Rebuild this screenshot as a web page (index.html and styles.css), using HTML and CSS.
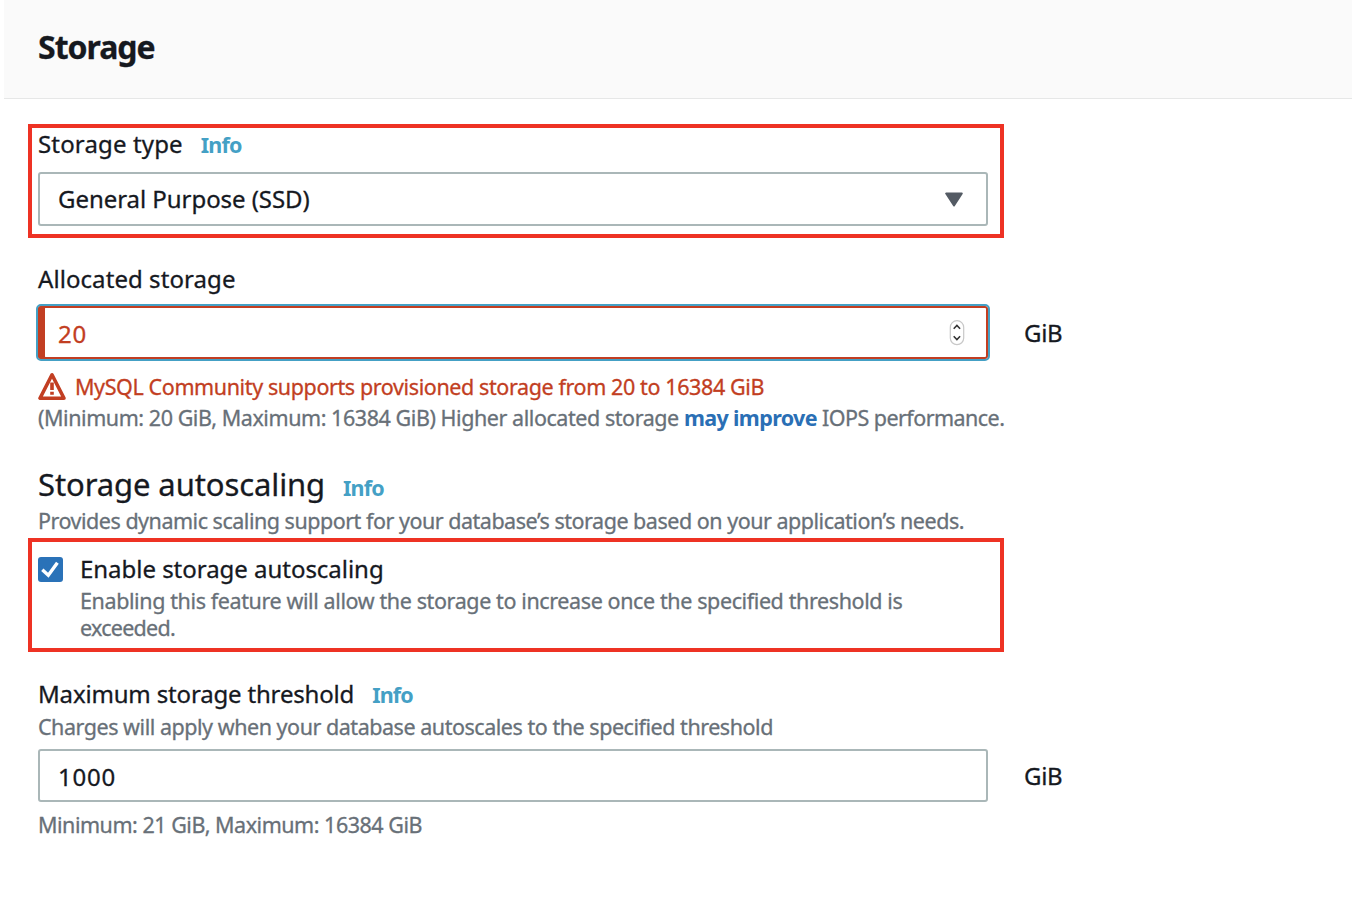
FILE: index.html
```html
<!DOCTYPE html>
<html lang="en">
<head>
<meta charset="utf-8">
<title>Storage</title>
<link rel="stylesheet" href="styles.css">
</head>
<body>
<header class="panel-header"><h2 class="title">Storage</h2></header>
<main class="form">
  <section class="highlight type-box">
    <div class="label-row"><span class="label type-label">Storage type</span><a class="info">Info</a></div>
    <div class="field select"><span class="type-value">General Purpose (SSD)</span>
      <svg class="caret" viewBox="0 0 18 15"><path d="M1.2 1.5h15.6L9 13.5z" fill="#545b64" stroke="#545b64" stroke-width="2" stroke-linejoin="round"/></svg>
    </div>
  </section>

  <section class="allocated">
    <div class="label-row"><span class="label alloc-label">Allocated storage</span></div>
    <div class="field-row">
      <div class="field invalid"><span class="number">20</span>
        <svg class="stepper" viewBox="0 0 18 28"><rect x="2.3" y="1.7" width="13.4" height="24" rx="6.7" fill="#fff" stroke="#c8c8c8" stroke-width="1.2"/><path d="M5.7 9.7 8.9 6.5l3.2 3.2M5.7 17.3l3.2 3.2 3.2-3.2" fill="none" stroke="#333" stroke-width="1.6"/></svg>
      </div>
      <span class="unit">GiB</span>
    </div>
    <div class="error-row">
      <svg class="warning" viewBox="0 0 28 28"><path d="M14 2.8 2 26.2h24z" fill="none" stroke="#c23e22" stroke-width="3.6" stroke-linejoin="round"/><path d="M14 10.5v7.5M14 19.8v3" stroke="#c23e22" stroke-width="3.6"/></svg>
      <span class="error-text">MySQL Community supports provisioned storage from 20 to 16384 GiB</span>
    </div>
    <p class="hint alloc-hint">(Minimum: 20 GiB, Maximum: 16384 GiB) Higher allocated storage <a class="link">may improve</a><span class="hint-tail"> IOPS performance.</span></p>
  </section>

  <section class="autoscaling">
    <div class="heading-row"><h3 class="subtitle">Storage autoscaling</h3><a class="info">Info</a></div>
    <p class="hint auto-hint">Provides dynamic scaling support for your database’s storage based on your application’s needs.</p>
  </section>

  <section class="highlight check-box">
    <svg class="checkbox" viewBox="0 0 25 25"><rect width="25" height="25" rx="3" fill="#2a72b8"/><path d="m4.3 12.8 6 5.4L19.4 5.7" fill="none" stroke="#fff" stroke-width="3.4"/></svg>
    <div class="check-copy">
      <div class="label check-label">Enable storage autoscaling</div>
      <p class="hint check-hint">Enabling this feature will allow the storage to increase once the specified threshold is<br><span class="check-tail">exceeded.</span></p>
    </div>
  </section>

  <section class="threshold">
    <div class="label-row"><span class="label max-label">Maximum storage threshold</span><a class="info">Info</a></div>
    <p class="hint max-hint">Charges will apply when your database autoscales to the specified threshold</p>
    <div class="field-row">
      <div class="field threshold-field"><span class="number">1000</span></div>
      <span class="unit">GiB</span>
    </div>
    <p class="hint range-hint">Minimum: 21 GiB, Maximum: 16384 GiB</p>
  </section>
</main>
</body>
</html>
```
FILE: styles.css
```css
* { box-sizing: border-box; }
body {
  margin: 0;
  background: #fff;
  color: #16191f;
  font-family: "Noto Sans", sans-serif;
  font-size: 24px;
  white-space: nowrap;
  -webkit-text-stroke: 0.3px;
}
h2, h3, p { margin: 0; font-weight: 400; }
svg { display: block; flex: none; }

.panel-header {
  width: 1348px;
  height: 99px;
  margin-left: 4px;
  padding: 26px 34px 0;
  background: #fafafa;
  border-bottom: 1px solid #e6e7e7;
}
.title { font-size: 32px; font-weight: 700; line-height: 42px; letter-spacing: -1px; }

.form { padding: 25px 0 0 28px; }
.highlight {
  width: 976px;
  height: 114px;
  border: 4px solid #ee3224;
  padding-left: 6px;
}
.label-row { display: flex; align-items: baseline; gap: 18px; height: 32px; line-height: 32px; }
.type-label { letter-spacing: 0.15px; }
.type-value { letter-spacing: -0.05px; padding-bottom: 2px; }
.alloc-label { letter-spacing: 0.07px; }
.max-label { letter-spacing: -0.17px; }
.check-label { letter-spacing: -0.03px; }
.info { color: #44a0c5; font-size: 21.5px; font-weight: 700; letter-spacing: -0.85px; -webkit-text-stroke: 0; }
.number { letter-spacing: 0.8px; }
.unit { letter-spacing: -0.3px; padding-bottom: 1px; }

.field {
  display: flex;
  align-items: center;
  justify-content: space-between;
  width: 950px;
  height: 53px;
  border: 2px solid #aab7b8;
  border-radius: 3px;
  padding: 0 23px 0 18px;
  background: #fff;
}
.select { height: 54px; margin-top: 12px; }
.caret { width: 18px; height: 15px; }
.field-row { display: flex; align-items: center; gap: 36px; }

.allocated { padding: 25px 0 0 10px; }
.allocated .field-row { margin: 9px 0 0 -2px; gap: 34px; }
.invalid {
  width: 954px;
  height: 57px;
  border-color: #44a0c5;
  border-radius: 5px;
  padding: 0 22px 0 20px;
  box-shadow: inset 7px 0 #c23e22, inset 0 0 0 2px #c23e22;
  color: #c23e22;
}
.invalid .number { padding-top: 2px; }
.stepper { width: 18px; height: 28px; }
.error-row { display: flex; gap: 9px; height: 30px; margin-top: 11px; line-height: 30px; color: #c23e22; font-size: 21.5px; }
.error-text { letter-spacing: -0.39px; }
.warning { width: 28px; height: 28px; }
.hint { color: #687078; font-size: 21.5px; line-height: 30px; }
.alloc-hint { letter-spacing: -0.44px; line-height: 31px; height: 30px; }
.hint-tail { letter-spacing: -0.54px; }
.link { color: #2a6fb5; font-weight: 700; letter-spacing: -0.64px; -webkit-text-stroke: 0; }

.autoscaling { padding: 32px 0 2px 10px; }
.heading-row { display: flex; align-items: baseline; gap: 18px; height: 40px; line-height: 40px; }
.subtitle { font-size: 31px; letter-spacing: -0.1px; }
.auto-hint { height: 32px; line-height: 33px; letter-spacing: -0.485px; }

.check-box { display: flex; gap: 17px; padding-top: 11px; }
.checkbox { width: 25px; height: 25px; margin-top: 4px; }
.check-label { line-height: 32px; }
.check-hint { line-height: 27px; margin-top: 1px; padding-top: 1px; letter-spacing: -0.39px; }
.check-tail { letter-spacing: -0.73px; }

.threshold { padding: 26px 0 0 10px; }
.max-hint { margin: 2px 0 7px; letter-spacing: -0.465px; }
.threshold-field { padding-top: 1px; }
.range-hint { margin-top: 8px; letter-spacing: -0.48px; }
```
